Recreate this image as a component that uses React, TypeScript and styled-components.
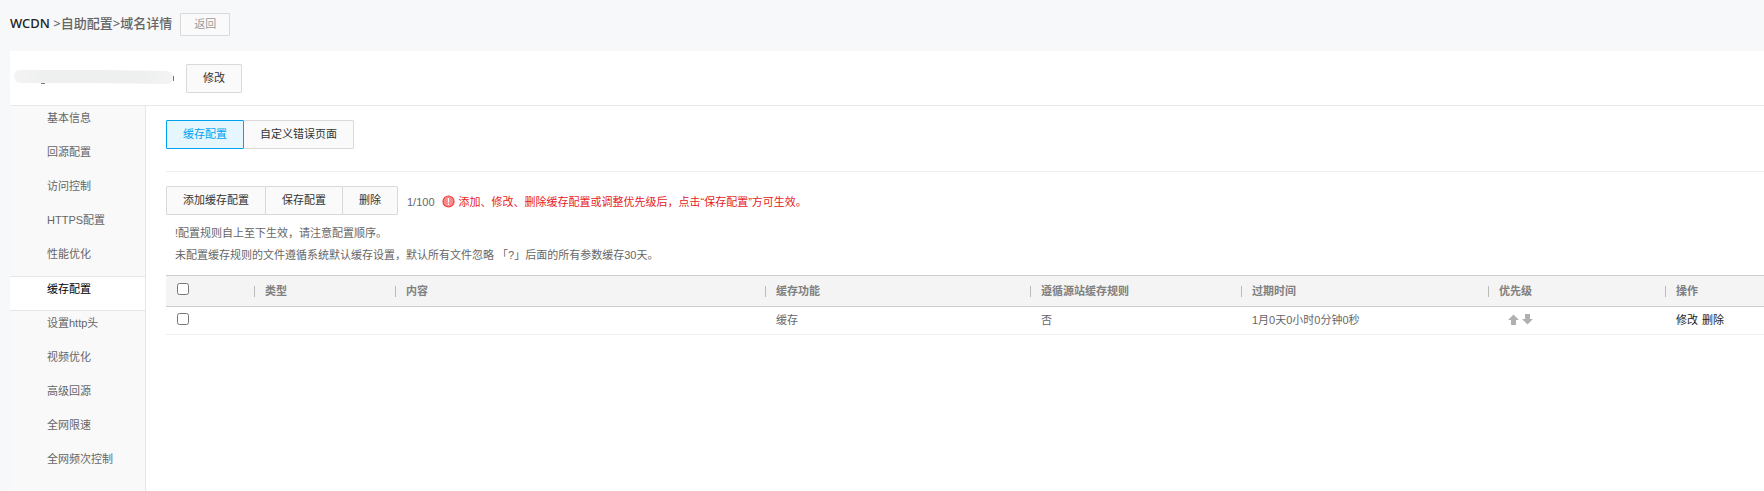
import React from "react";
import styled, { createGlobalStyle, css } from "styled-components";

const GlobalStyle = createGlobalStyle`
  * { box-sizing: border-box; }
  body {
    margin: 0;
    background: #f7f8fa;
    color: #666;
    font: 11px/22px "Liberation Sans", "Noto Sans CJK SC", sans-serif;
  }
  button, input { font: inherit; }
`;

const Page = styled.div`
  display: flex;
  flex-direction: column;
  min-height: 100vh;
  padding-left: 10px;
`;

const TopBar = styled.header`
  display: flex;
  align-items: center;
  gap: 8px;
  height: 51px;
  padding-bottom: 3px;
`;

const Breadcrumb = styled.h1`
  margin: 0;
  padding-bottom: 2px;
  font: 500 13px/22px "Noto Sans", "Noto Sans CJK SC", sans-serif;
  color: #666;
`;

const Product = styled.span`
  color: #222;
`;

const Button = styled.button<{ $small?: boolean; $active?: boolean }>`
  height: ${(p) => (p.$small ? 23 : 29)}px;
  padding: 0 ${(p) => (p.$small ? 13 : 16)}px;
  border: 1px solid #d9d9d9;
  border-radius: 1px;
  background: #fafafa;
  color: ${(p) => (p.$small ? "#999" : "#333")};
  line-height: 20px;
  white-space: nowrap;
  cursor: pointer;
  ${(p) =>
    p.$active &&
    css`
      position: relative;
      border-color: #00a2f2;
      background: #e5f6fe;
      color: #00a2f2;
    `}
`;

const ButtonGroup = styled.div`
  display: flex;
  ${Button} {
    padding-bottom: 2px;
  }
  ${Button} + ${Button} {
    margin-left: -1px;
  }
`;

const Panel = styled.main`
  display: flex;
  flex: 1;
  flex-direction: column;
  background: #fff;
`;

const DomainBar = styled.div`
  display: flex;
  align-items: center;
  gap: 12px;
  height: 55px;
  padding-left: 4px;
  border-bottom: 1px solid #e8e8e8;
`;

const Columns = styled.div`
  display: flex;
  flex: 1;
`;

const Sidebar = styled.nav`
  flex: 0 0 136px;
  border-right: 1px solid #e6e6e6;
  background: #f9f9f9;
`;

const NavLink = styled.a<{ $active?: boolean }>`
  display: block;
  height: 34px;
  padding-left: 37px;
  color: #666;
  line-height: 24px;
  text-decoration: none;
  ${(p) =>
    p.$active &&
    css`
      height: 35px;
      border: solid #e6e6e6;
      border-width: 1px 0;
      background: #fff;
      color: #000;
    `}
`;

const Content = styled.section`
  flex: 1;
  min-width: 0;
  padding: 14px 0 0 20px;
`;

const Tabs = styled.div`
  padding-bottom: 22px;
  border-bottom: 1px solid #eee;
`;

const Toolbar = styled.div`
  display: flex;
  align-items: center;
  padding-top: 14px;
`;

const Count = styled.span`
  margin: 2px 7px 0 9px;
`;

const Warning = styled.span`
  display: flex;
  align-items: center;
  gap: 4px;
  margin-top: 2px;
  color: #e61a23;
`;

const Tips = styled.div`
  padding: 7px 0 9px 9px;
  p { margin: 0; }
`;

const Table = styled.table`
  width: 100%;
  border-collapse: separate;
  border-spacing: 0;
  table-layout: fixed;
`;

const HeadCell = styled.th`
  height: 32px;
  padding: 0;
  border: solid #ccc;
  border-width: 1px 0;
  background: #f4f4f4;
  color: #808080;
  font-weight: 700;
  line-height: 11px;
  text-align: left;
  vertical-align: middle;
`;

const HeadLabel = styled.span`
  display: block;
  padding-left: 10px;
  border-left: 1px solid #bbb;
`;

const Cell = styled.td`
  height: 28px;
  padding: 0 0 2px 11px;
  border-bottom: 1px solid #eee;
  line-height: 20px;
`;

const Checkbox = styled.input`
  display: block;
  width: 12px;
  height: 12px;
  margin: 0 0 2px;
`;

const HeadCheck = styled.div`
  padding: 0 0 2px 11px;
`;

const ActionLink = styled.a`
  margin-right: 4px;
  color: #222;
  text-decoration: none;
`;

const Priority = styled.div`
  display: flex;
  gap: 3px;
  padding-left: 9px;
`;

const IconButton = styled.button`
  display: flex;
  padding: 0;
  border: 0;
  background: none;
  cursor: pointer;
`;

const navItems = [
  "基本信息", "回源配置", "访问控制", "HTTPS配置", "性能优化", "缓存配置",
  "设置http头", "视频优化", "高级回源", "全网限速", "全网频次控制",
];

const columns: { label: string; width?: number }[] = [
  { label: "类型", width: 141 },
  { label: "内容" },
  { label: "缓存功能", width: 265 },
  { label: "遵循源站缓存规则", width: 211 },
  { label: "过期时间", width: 247 },
  { label: "优先级", width: 177 },
  { label: "操作", width: 99 },
];

function MaskedDomain() {
  return (
    <svg width="160" height="16" viewBox="0 0 160 16" role="img" aria-label="域名">
      <defs>
        <linearGradient id="mask" x1="0" x2="1">
          <stop offset="0" stopColor="#f4f4f4" />
          <stop offset="0.2" stopColor="#eeefef" />
          <stop offset="0.8" stopColor="#eeefef" />
          <stop offset="1" stopColor="#f4f4f4" />
        </linearGradient>
      </defs>
      <path d="M5 0H90L153 1Q159 2 159 7Q159 13 153 14L75 13H5Q0 12 0 6Q0 1 5 0Z" fill="url(#mask)" />
      <path d="M27 13.500h4" stroke="#777" />
      <path d="M159.500 6v5" stroke="#777" />
    </svg>
  );
}

function WarningIcon() {
  return (
    <svg width="13" height="13" viewBox="0 0 13 13" aria-hidden="true">
      <circle cx="6.500" cy="6.500" r="5.500" fill="#fb8a8a" stroke="#ee3e43" strokeWidth="1.200" />
      <path d="M6.500 3v4.500M6.500 8.500v1.500" stroke="#fff" strokeWidth="1.200" />
    </svg>
  );
}

function Arrow({ down }: { down?: boolean }) {
  return (
    <svg width="11" height="11" viewBox="0 0 11 11" aria-hidden="true">
      <path
        d={down ? "M3 0H8V5H11L5.500 10.500L0 5H3Z" : "M5.500 0.500L11 6H8V11H3V6H0Z"}
        fill="#b0b0b0"
      />
    </svg>
  );
}

export default function App() {
  return (
    <Page>
      <GlobalStyle />
      <TopBar>
        <Breadcrumb><Product>WCDN</Product> &gt;自助配置&gt;域名详情</Breadcrumb>
        <Button $small>返回</Button>
      </TopBar>
      <Panel>
        <DomainBar>
          <MaskedDomain />
          <Button>修改</Button>
        </DomainBar>
        <Columns>
          <Sidebar>
            {navItems.map((item) => (
              <NavLink key={item} href="#" $active={item === "缓存配置"}>{item}</NavLink>
            ))}
          </Sidebar>
          <Content>
            <Tabs>
              <ButtonGroup>
                <Button $active>缓存配置</Button>
                <Button>自定义错误页面</Button>
              </ButtonGroup>
            </Tabs>
            <Toolbar>
              <ButtonGroup>
                <Button>添加缓存配置</Button>
                <Button>保存配置</Button>
                <Button>删除</Button>
              </ButtonGroup>
              <Count>1/100</Count>
              <Warning>
                <WarningIcon />
                添加、修改、删除缓存配置或调整优先级后，点击“保存配置”方可生效。
              </Warning>
            </Toolbar>
            <Tips>
              <p>!配置规则自上至下生效，请注意配置顺序。</p>
              <p>未配置缓存规则的文件遵循系统默认缓存设置，默认所有文件忽略 「?」后面的所有参数缓存30天。</p>
            </Tips>
            <Table>
              <colgroup>
                <col width={88} />
                {columns.map((c) => <col key={c.label} width={c.width} />)}
              </colgroup>
              <thead>
                <tr>
                  <HeadCell>
                    <HeadCheck><Checkbox type="checkbox" aria-label="全选" /></HeadCheck>
                  </HeadCell>
                  {columns.map((c) => (
                    <HeadCell key={c.label} scope="col"><HeadLabel>{c.label}</HeadLabel></HeadCell>
                  ))}
                </tr>
              </thead>
              <tbody>
                <tr>
                  <Cell><Checkbox type="checkbox" aria-label="选择规则" /></Cell>
                  <Cell />
                  <Cell />
                  <Cell>缓存</Cell>
                  <Cell>否</Cell>
                  <Cell>1月0天0小时0分钟0秒</Cell>
                  <Cell>
                    <Priority>
                      <IconButton aria-label="上移"><Arrow /></IconButton>
                      <IconButton aria-label="下移"><Arrow down /></IconButton>
                    </Priority>
                  </Cell>
                  <Cell>
                    <ActionLink href="#">修改</ActionLink>
                    <ActionLink href="#">删除</ActionLink>
                  </Cell>
                </tr>
              </tbody>
            </Table>
          </Content>
        </Columns>
      </Panel>
    </Page>
  );
}
